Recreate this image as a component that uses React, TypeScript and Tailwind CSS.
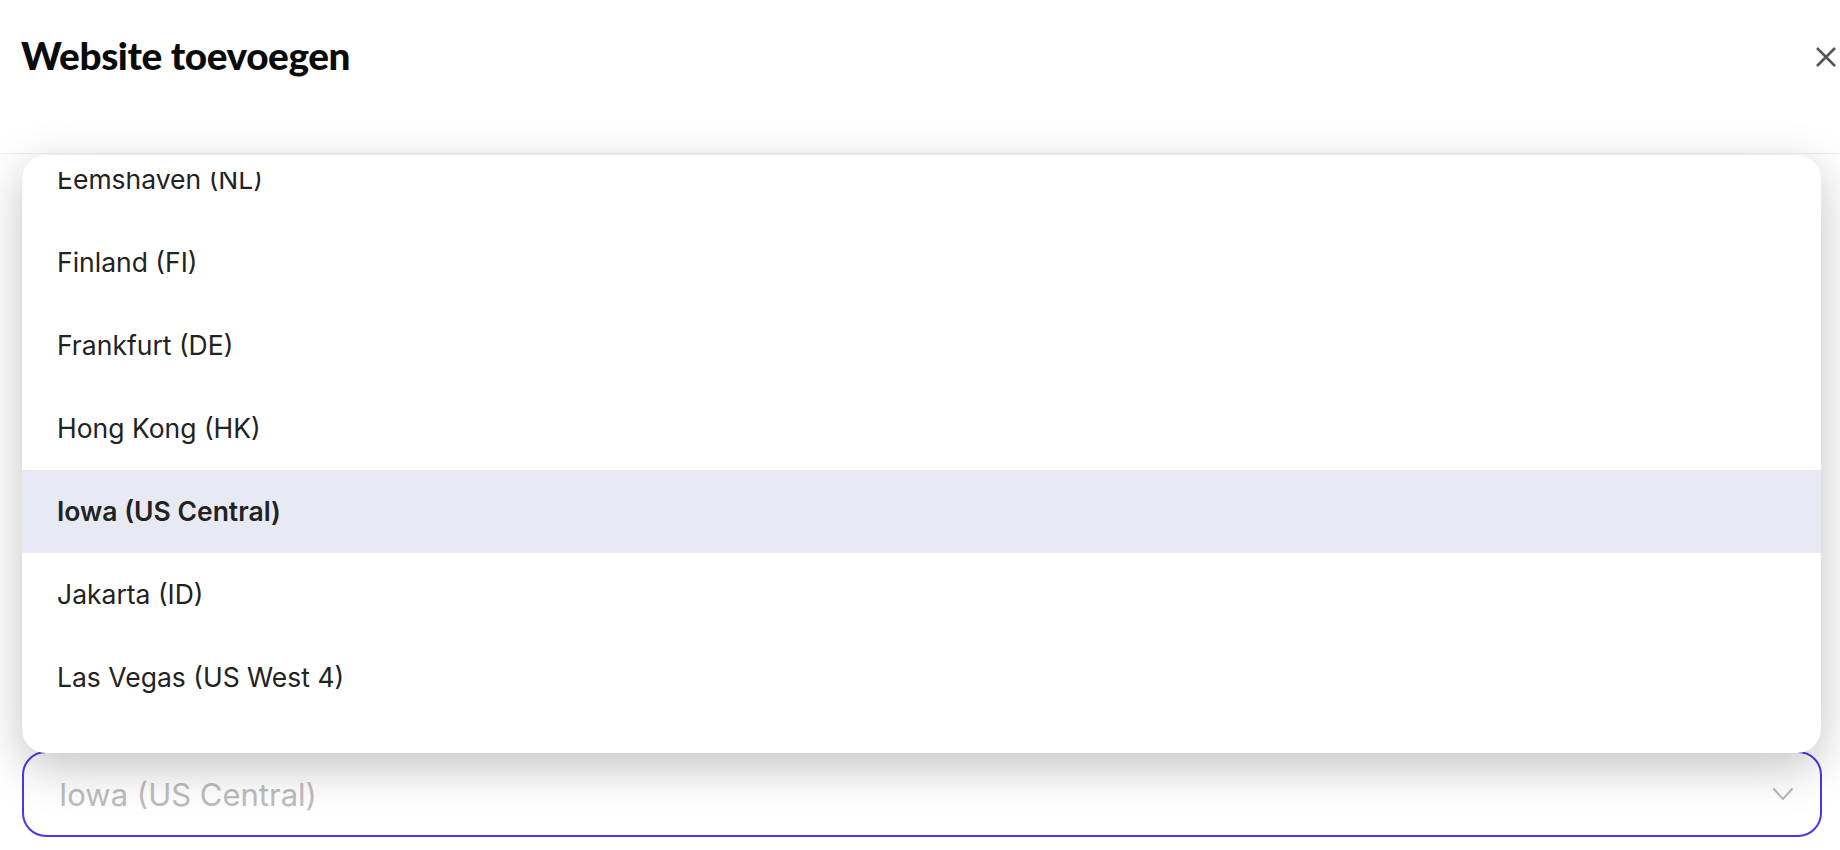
import React from 'react'

const REGIONS = [
  'Eemshaven (NL)',
  'Finland (FI)',
  'Frankfurt (DE)',
  'Hong Kong (HK)',
  'Iowa (US Central)',
  'Jakarta (ID)',
  'Las Vegas (US West 4)',
]

const SELECTED = 'Iowa (US Central)'

function CloseIcon() {
  return (
    <svg width="22" height="22" viewBox="0 0 22 22" fill="none">
      <path d="M2 2L20 20M20 2L2 20" stroke="#555555" strokeWidth="2.6" />
    </svg>
  )
}

function Chevron() {
  return (
    <svg width="22" height="14" viewBox="0 0 22 14" fill="none">
      <path d="M1.5 1.5L11 12L20.5 1.5" stroke="#b8b8b8" strokeWidth="2" />
    </svg>
  )
}

function RegionMenu() {
  return (
    <div className="absolute bottom-full left-0 right-[1px] mb-[-2px] h-[598px] bg-white rounded-[24px] shadow-[0_14px_48px_rgba(0,0,0,0.24)] py-[17px] z-10">
      <div className="h-full overflow-hidden">
        <ul className="mt-[-34px]">
          {REGIONS.map(r => {
            const active = r === SELECTED
            return (
              <li
                key={r}
                className={`h-[83px] flex items-center pl-[35px] text-[26.5px] leading-none text-[#222222] ${
                  active ? 'bg-[#e8eaf3] font-semibold' : 'font-normal'
                }`}
              >
                {r}
              </li>
            )
          })}
        </ul>
      </div>
    </div>
  )
}

export default function App() {
  return (
    <div className="w-[1840px] h-[850px] bg-white overflow-hidden font-['Inter',sans-serif]">
      <header className="h-[154px] border-b border-[#efefef] flex items-start justify-between pl-[21px] pr-[2px]">
        <h1 className="mt-[36px] text-[38.7px] leading-none font-black tracking-[-0.01em] text-[#0b0b0b] font-['Lato',sans-serif]">
          Website toevoegen
        </h1>
        <button className="mt-[45px] w-[24px] h-[24px] flex items-center justify-center">
          <CloseIcon />
        </button>
      </header>

      <div className="pl-[22px] pr-[18px]">
        <div className="h-[597px]" />
        <div className="relative">
          <RegionMenu />
          <div className="h-[86px] rounded-[24px] border-2 border-[#5333ed] flex items-center justify-between pl-[35px] pr-[26px]">
            <span className="text-[31px] leading-none text-[#bdbdbd]">{SELECTED}</span>
            <Chevron />
          </div>
        </div>
      </div>
    </div>
  )
}
